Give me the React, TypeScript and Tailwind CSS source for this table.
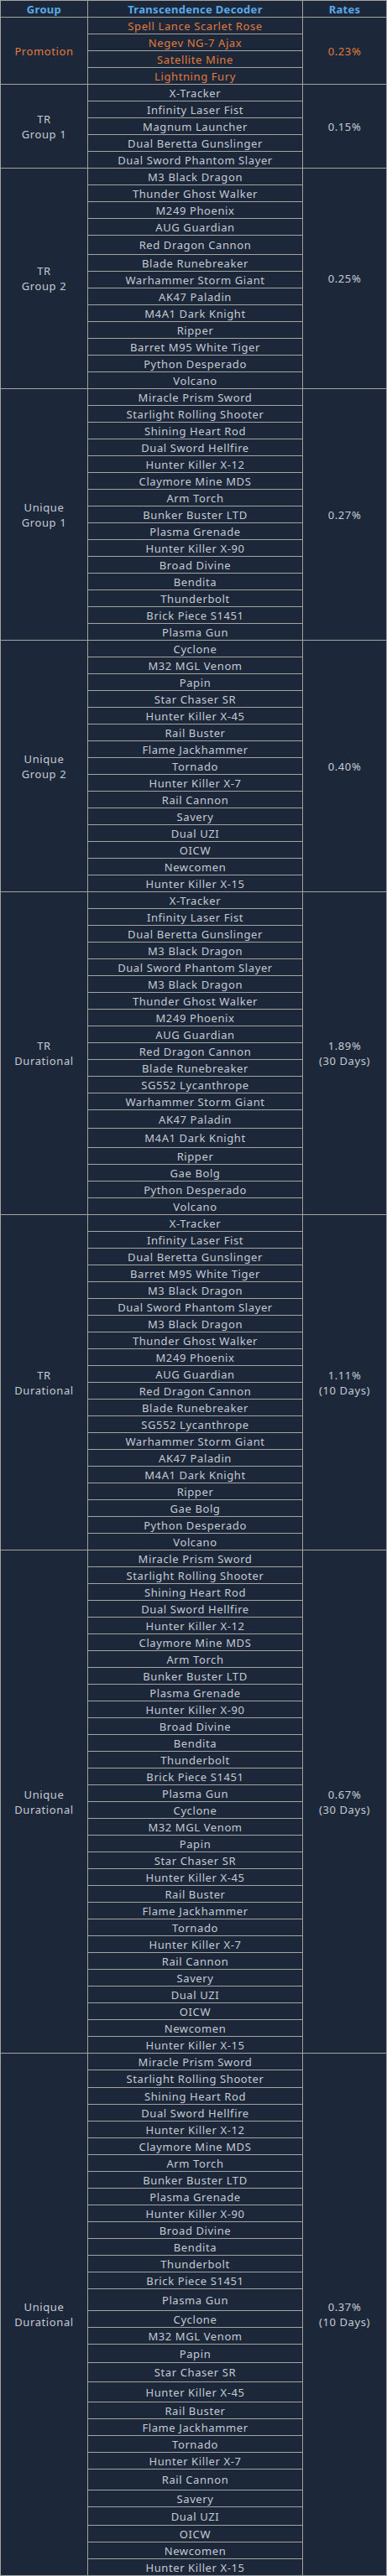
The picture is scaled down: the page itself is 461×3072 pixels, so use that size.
import React from 'react';

type Item = { name: string; h?: number };
type Group = { label: string[]; rate: string[]; items: Item[]; promo?: boolean };

const tr1 = ['X-Tracker', 'Infinity Laser Fist', 'Magnum Launcher', 'Dual Beretta Gunslinger', 'Dual Sword Phantom Slayer'];

const uniq1 = [
  'Miracle Prism Sword', 'Starlight Rolling Shooter', 'Shining Heart Rod', 'Dual Sword Hellfire', 'Hunter Killer X-12',
  'Claymore Mine MDS', 'Arm Torch', 'Bunker Buster LTD', 'Plasma Grenade', 'Hunter Killer X-90', 'Broad Divine',
  'Bendita', 'Thunderbolt', 'Brick Piece S1451', 'Plasma Gun',
];

const uniq2 = [
  'Cyclone', 'M32 MGL Venom', 'Papin', 'Star Chaser SR', 'Hunter Killer X-45', 'Rail Buster', 'Flame Jackhammer',
  'Tornado', 'Hunter Killer X-7', 'Rail Cannon', 'Savery', 'Dual UZI', 'OICW', 'Newcomen', 'Hunter Killer X-15',
];

const trDur = [
  'M3 Black Dragon', 'Dual Sword Phantom Slayer', 'M3 Black Dragon', 'Thunder Ghost Walker', 'M249 Phoenix',
  'AUG Guardian', 'Red Dragon Cannon', 'Blade Runebreaker', 'SG552 Lycanthrope', 'Warhammer Storm Giant',
  'AK47 Paladin', 'M4A1 Dark Knight', 'Ripper', 'Gae Bolg', 'Python Desperado', 'Volcano',
];

// a few rows in the source are a bit taller than the rest
const rows = (names: string[], tall: Record<string, number> = {}): Item[] =>
  names.map((name) => ({ name, h: tall[name] }));

const groups: Group[] = [
  {
    label: ['Promotion'],
    rate: ['0.23%'],
    promo: true,
    items: rows(['Spell Lance Scarlet Rose', 'Negev NG-7 Ajax', 'Satellite Mine', 'Lightning Fury']),
  },
  { label: ['TR', 'Group 1'], rate: ['0.15%'], items: rows(tr1) },
  {
    label: ['TR', 'Group 2'],
    rate: ['0.25%'],
    items: rows(
      [
        'M3 Black Dragon', 'Thunder Ghost Walker', 'M249 Phoenix', 'AUG Guardian', 'Red Dragon Cannon',
        'Blade Runebreaker', 'Warhammer Storm Giant', 'AK47 Paladin', 'M4A1 Dark Knight', 'Ripper',
        'Barret M95 White Tiger', 'Python Desperado', 'Volcano',
      ],
      { 'Red Dragon Cannon': 23 }
    ),
  },
  { label: ['Unique', 'Group 1'], rate: ['0.27%'], items: rows(uniq1) },
  { label: ['Unique', 'Group 2'], rate: ['0.40%'], items: rows(uniq2) },
  {
    label: ['TR', 'Durational'],
    rate: ['1.89%', '(30 Days)'],
    items: rows(['X-Tracker', 'Infinity Laser Fist', 'Dual Beretta Gunslinger', ...trDur], {
      'AK47 Paladin': 22,
      'M4A1 Dark Knight': 23,
    }),
  },
  {
    label: ['TR', 'Durational'],
    rate: ['1.11%', '(10 Days)'],
    items: rows(['X-Tracker', 'Infinity Laser Fist', 'Dual Beretta Gunslinger', 'Barret M95 White Tiger', ...trDur]),
  },
  { label: ['Unique', 'Durational'], rate: ['0.67%', '(30 Days)'], items: rows([...uniq1, ...uniq2]) },
  {
    label: ['Unique', 'Durational'],
    rate: ['0.37%', '(10 Days)'],
    items: rows([...uniq1, ...uniq2], {
      'Starlight Rolling Shooter': 21,
      'Plasma Gun': 26,
      Papin: 22,
      'Star Chaser SR': 23,
      'Hunter Killer X-45': 24,
      'Rail Cannon': 25,
      'Dual UZI': 22,
    }),
  },
];

const cell = 'border border-[#a3a3a3] text-center align-middle p-0 whitespace-nowrap';

const App: React.FC = () => {
  return (
    <div className="w-[461px] bg-[#1c2739] font-['Noto_Sans',sans-serif] text-[13px] leading-[18px] tracking-[0.6px] text-[#c5cad3]">
      <table className="w-full border-collapse table-fixed">
        <colgroup>
          <col className="w-[104px]" />
          <col className="w-[256px]" />
          <col />
        </colgroup>
        <thead>
          <tr className="h-[20px]">
            <th className={`${cell} font-bold tracking-[0.3px] text-[#5aa9e6]`}>Group</th>
            <th className={`${cell} font-bold tracking-[0.3px] text-[#5aa9e6]`}>Transcendence Decoder</th>
            <th className={`${cell} font-bold tracking-[0.3px] text-[#5aa9e6]`}>Rates</th>
          </tr>
        </thead>
        <tbody>
          {groups.map((g, gi) =>
            g.items.map((it, i) => (
              <tr key={`${gi}-${i}`} style={{ height: it.h ?? 20 }}>
                {i === 0 && (
                  <td rowSpan={g.items.length} className={`${cell} ${g.promo ? 'text-[#e07b3c]' : ''}`}>
                    {g.label.map((l) => (
                      <div key={l}>{l}</div>
                    ))}
                  </td>
                )}
                <td className={`${cell} ${g.promo ? 'text-[#e07b3c]' : ''}`}>{it.name}</td>
                {i === 0 && (
                  <td rowSpan={g.items.length} className={`${cell} ${g.promo ? 'text-[#e07b3c]' : ''}`}>
                    {g.rate.map((r) => (
                      <div key={r}>{r}</div>
                    ))}
                  </td>
                )}
              </tr>
            ))
          )}
        </tbody>
      </table>
    </div>
  );
};

export default App;
